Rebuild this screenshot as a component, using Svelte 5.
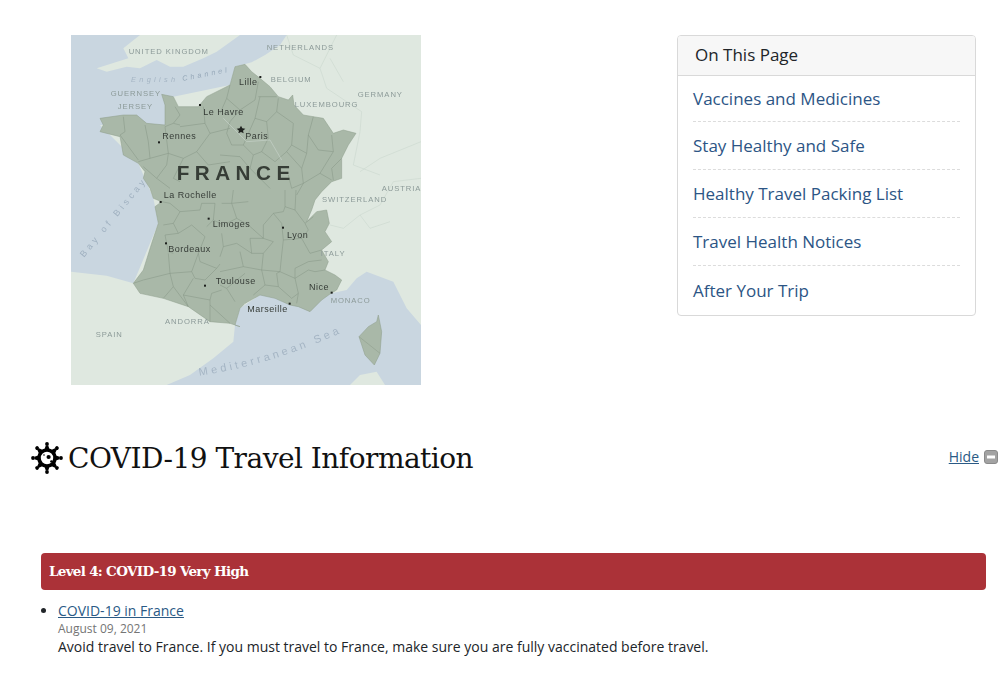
<script>
  const links = ['Vaccines and Medicines', 'Stay Healthy and Safe', 'Healthy Travel Packing List', 'Travel Health Notices', 'After Your Trip'];
  const spikes = [0, 45, 90, 135, 180, 225, 270, 315];
  const cities = [
    { x: 601, y: 156 }, { x: 420, y: 240 }, { x: 297, y: 352 }, { x: 302, y: 531 },
    { x: 446, y: 581 }, { x: 669, y: 608 }, { x: 318, y: 655 }, { x: 435, y: 782 },
    { x: 689, y: 836 }, { x: 815, y: 803 }
  ];
  const labels = [
    { t: 'Lille', x: 537, y: 180 }, { t: 'Le Havre', x: 430, y: 271 }, { t: 'Paris', x: 556, y: 343 },
    { t: 'Rennes', x: 307, y: 343 }, { t: 'La Rochelle', x: 311, y: 519 }, { t: 'Limoges', x: 458, y: 607 },
    { t: 'Lyon', x: 681, y: 639 }, { t: 'Bordeaux', x: 325, y: 680 }, { t: 'Toulouse', x: 467, y: 776 },
    { t: 'Nice', x: 747, y: 795 }, { t: 'Marseille', x: 562, y: 860 }
  ];
  const countries = [
    { t: 'UNITED KINGDOM', x: 206, y: 86 }, { t: 'NETHERLANDS', x: 620, y: 76 }, { t: 'BELGIUM', x: 632, y: 172 },
    { t: 'GERMANY', x: 893, y: 216 }, { t: 'GUERNSEY', x: 152, y: 212 }, { t: 'JERSEY', x: 173, y: 252 },
    { t: 'LUXEMBOURG', x: 704, y: 247 }, { t: 'AUSTRIA', x: 965, y: 497 }, { t: 'SWITZERLAND', x: 786, y: 531 },
    { t: 'ITALY', x: 782, y: 692 }, { t: 'MONACO', x: 812, y: 835 }, { t: 'ANDORRA', x: 315, y: 898 }, { t: 'SPAIN', x: 107, y: 937 }
  ];
  const franceOutline = 'M510 180L525 125L555 118L575 140L600 160L630 185L655 215L685 225L698 210L702 240L730 270L760 275L790 280L820 325L850 315L888 325L865 360L845 400L845 460L815 470L785 500L765 525L755 555L740 590L770 560L800 555L808 595L795 620L815 650L785 675L805 710L795 735L825 750L845 765L830 795L810 807L785 825L750 860L715 845L690 840L645 820L600 810L555 835L540 850L525 900L540 905L510 895L450 890L385 845L310 820L240 805L220 775L250 735L275 655L295 595L285 545L305 530L280 520L270 490L250 460L255 440L235 415L190 390L180 335L120 320L130 300L120 280L190 270L230 270L260 295L315 300L315 240L305 208L340 215L355 245L415 245L440 215Z';
  const deptGroups = [
    { tx: 90, ty: 90, d: 'M100 185L105 230L90 240L145 315M165 210L175 260L180 310L145 320M225 215L235 295L180 310M270 210L250 205L225 215M255 155L270 180L250 205M340 155L345 205L270 215M345 205L360 235L320 290L280 310L235 295M420 220L360 235M320 290L355 330L420 320M235 295L230 330L200 370L160 335M280 310L250 370L270 380M200 370L240 400' },
    { tx: 480, ty: 90, d: 'M30 90L20 130L60 165L105 135L115 80M115 125L170 125M120 125L105 190L140 200L170 170L175 130M170 170L220 205L215 270L260 295L265 240L280 185M20 130L0 175M60 165L30 200L20 235L35 270L70 270L105 190M140 200L145 250L125 290L165 320L200 290L215 270M125 290L100 300L70 270M265 240L295 285L340 290L335 240M260 295L245 340L200 290M245 340L250 385L300 355L340 290M300 355L335 375M250 385L230 420M365 310L335 340L340 375M100 300L90 340L150 400M0 300L60 305L90 340M205 360L215 400L250 385' },
    { tx: 210, ty: 495, d: 'M95 35L120 40L150 65L130 100L145 130L185 105L225 140L205 190L210 215L260 235L270 222M150 65L210 60L215 40L255 40L250 90L230 110M250 90L280 105M130 100L100 105M145 130L105 135L115 185L130 190M115 190L120 250L40 270L10 280M120 250L185 245L205 190M185 245L195 265L225 270L260 235M120 250L130 290L100 325M130 290L175 350M190 265L160 315L175 350M160 315L240 330L240 395M240 330L245 310L275 300M240 345L300 400' },
    { tx: 480, ty: 495, d: 'M40 0L35 40L85 35M35 40L5 40M35 40L50 85L20 100M50 85L85 105L130 145L90 145L95 190M130 145L130 105L160 70L190 65L195 50L225 60L255 100L265 120L245 145L270 190L305 180M160 70L185 100L190 150L185 195L180 245L125 240L130 190M190 150L245 145M95 190L50 160L10 170L5 130M95 190L130 190L160 155L130 145M10 170L0 200M60 185L70 230L125 240M180 245L225 265L225 235L265 215L305 210M225 265L265 240L285 245L315 240M225 265L235 310L230 340M125 240L135 285L100 315M135 285L175 290L170 250L180 245M175 290L215 325L235 310M70 230L0 245M195 50L195 0M225 60L228 0M255 100L280 80M0 285L20 295L45 335M20 295L75 250' }
  ];
</script>

<main class="page">
  <section class="top">
    <svg class="map" viewBox="33 30 1050 1050" role="img" aria-label="Map of France">
      <defs>
        <clipPath id="frame"><rect x="33" y="30" width="1050" height="1050" /></clipPath>
        <path id="medArc" d="M418 1052Q640 1020 860 915" />
      </defs>
      <g clip-path="url(#frame)">
        <rect x="33" y="30" width="1050" height="1050" fill="#dfe8e0" />
        <path fill="#c9d6e0" d="M33 30H240L190 70L205 100L110 130L140 140L200 125L240 130L290 105L330 125L370 125L430 100L470 80L540 30H680L660 60L615 90L575 112L525 125L510 180L340 215L315 300L120 300L235 415L280 520L295 595L220 775L140 752L33 740Z" />
        <path fill="#c9d6e0" d="M525 900L540 850L600 810L815 805L860 795L890 760L920 740L1000 770L1040 850L1083 900V1080H320L390 1050L460 1000L520 950Z" />
        <path fill="#dfe8e0" d="M870 1080L900 1050L950 1040L975 1080Z" />
        <g fill="none" stroke="#c9d5cc" stroke-width="1.6">
          <path d="M680 30L700 90L780 130L800 190L860 230L905 260L900 320L880 420L960 450M810 100L850 170M1083 350L960 400L900 440M1083 460L1000 470L960 540L900 570L850 610L810 600M900 570L930 610L990 590M830 30L780 130" />
        </g>
        <path fill="#a9b8a8" stroke="#8d9d8b" stroke-width="1.5" d={franceOutline} />
        <path fill="#a9b8a8" stroke="#8d9d8b" stroke-width="1.5" d="M955 870L965 920L960 985L943 1020L915 990L897 935L925 905L950 890Z" />
        <path fill="none" stroke="#889887" stroke-width="1.4" d="M897 935L960 985" />
        <g fill="none" stroke="#859584" stroke-width="1.5" stroke-linejoin="round">
          {#each deptGroups as g}<path transform="translate({g.tx} {g.ty})" d={g.d} />{/each}
        </g>
        <path fill="none" stroke="#c5d2c8" stroke-width="2" d="M490 280L560 350L630 345L665 405" />
        {#each cities as c}<rect x={c.x - 3} y={c.y - 3} width="6" height="6" fill="#1c1f1c" />{/each}
        <path fill="#1f221f" d="M543 302L547 310L556 311L549 317L551 325L543 321L535 325L537 317L530 311L539 310Z" />
        <g class="country">
          {#each countries as c}<text x={c.x} y={c.y}>{c.t}</text>{/each}
        </g>
        <g class="city">
          {#each labels as l}<text x={l.x} y={l.y}>{l.t}</text>{/each}
        </g>
        <text class="france" x="350" y="466">FRANCE</text>
        <text class="sea english" x="213" y="172">English</text>
        <text class="sea channel" x="368" y="168" transform="rotate(-11 368 168)">Channel</text>
        <text class="sea biscay" x="72" y="698" transform="rotate(-50.6 72 698)">Bay of Biscay</text>
        <text class="sea wide"><textPath href="#medArc">Mediterranean Sea</textPath></text>
      </g>
    </svg>
    <aside class="card">
      <h2>On This Page</h2>
      <ul>
        {#each links as link}<li><a href="#top">{link}</a></li>{/each}
      </ul>
    </aside>
  </section>

  <section class="covid">
    <svg class="virus" viewBox="0 0 32 32" aria-hidden="true">
      {#each spikes as a}
        <g transform="rotate({a} 16 16)">
          <path d="M13 8.5L14.8 3.5H17.2L19 8.5Z" fill="#000" />
          <circle cx="16" cy="2" r="1.9" fill="#000" />
        </g>
      {/each}
      <circle cx="16" cy="16" r="8" fill="#fff" stroke="#000" stroke-width="3.6" />
      <circle cx="17.6" cy="15" r="2.1" fill="#000" />
      <circle cx="20.4" cy="19.4" r="1.2" fill="#000" />
      <circle cx="13" cy="13" r="0.8" fill="#000" />
    </svg>
    <h1>COVID-19 Travel Information</h1>
    <a class="hide" href="#top">Hide</a>
    <svg class="minus" viewBox="0 0 14 14" aria-hidden="true">
      <rect x="0.5" y="0.5" width="13" height="13" rx="2.5" fill="#a3a3a3" stroke="#8a8a8a" />
      <rect x="3" y="5.5" width="8" height="3" fill="#fff" />
    </svg>
  </section>

  <div class="banner">Level 4: COVID-19 Very High</div>
  <ul class="notices">
    <li>
      <a href="#top">COVID-19 in France</a>
      <span class="date">August 09, 2021</span>
      <span class="desc">Avoid travel to France. If you must travel to France, make sure you are fully vaccinated before travel.</span>
    </li>
  </ul>
</main>

<style>
  :global(body) { background: #fff; }
  .page {
    width: 1001px;
    height: 679px;
    overflow: hidden;
    font-family: "Open Sans", sans-serif;
    color: #212529;
    box-sizing: border-box;
  }
  .top {
    display: flex;
    justify-content: space-between;
    align-items: flex-start;
    padding: 35px 25px 0 71px;
    height: 420px;
    box-sizing: border-box;
  }
  .map { display: block; width: 350px; height: 350px; filter: blur(0.35px); }
  .country text { font: 23px "Liberation Sans", sans-serif; letter-spacing: 2.8px; fill: #8c9a98; }
  .city text { font: 27px "Liberation Sans", sans-serif; letter-spacing: 1.5px; fill: #363c37; }
  .france { font: bold 62px "Liberation Sans", sans-serif; letter-spacing: 16.5px; fill: #363d36; }
  .sea { font: italic 22px "Liberation Sans", sans-serif; fill: #a5b5c4; }
  .english { letter-spacing: 10px; }
  .channel { letter-spacing: 9px; fill: #98aaba; }
  .biscay { font-size: 27px; font-style: normal; letter-spacing: 10.5px; fill: #a0b1c0; }
  .wide { font-size: 33px; font-style: normal; letter-spacing: 10px; fill: #a5b5c4; }
  .card {
    width: 299px;
    height: 281px;
    box-sizing: border-box;
    border: 1px solid #d9d9d9;
    border-radius: 4px;
    overflow: hidden;
  }
  .card h2 {
    margin: 0;
    height: 40px;
    box-sizing: border-box;
    padding-left: 17px;
    background: #f7f7f7;
    border-bottom: 1px solid #d9d9d9;
    font-size: 17px;
    font-weight: 400;
    line-height: 38px;
    color: #212529;
  }
  .card ul { list-style: none; margin: 0; padding: 0 15px; }
  .card li { height: 48px; box-sizing: border-box; border-bottom: 1px dashed #dcdcdc; line-height: 48px; }
  .card li:first-child { height: 46px; line-height: 46px; }
  .card li:last-child { border-bottom: 0; line-height: 50px; }
  .card a { color: #2c5585; text-decoration: none; font-size: 17px; }
  .covid {
    display: flex;
    align-items: center;
    padding: 0 3px 0 31px;
    height: 32px;
    margin-top: 22px;
  }
  .virus { width: 32px; height: 32px; flex: none; }
  .covid h1 {
    margin: 0 0 0 5px;
    flex: 1;
    font-family: "DejaVu Serif", serif;
    font-size: 28px;
    letter-spacing: -0.52px;
    font-weight: 400;
    color: #111;
    white-space: nowrap;
  }
  .hide { color: #2a5a85; font-size: 14px; margin: 0 5px 3px 0; }
  .minus { width: 14px; height: 14px; flex: none; margin-bottom: 3px; }
  .banner {
    margin: 79px 15px 0 41px;
    height: 37px;
    background: #ab3238;
    border-radius: 4px;
    color: #fff;
    padding-left: 8px;
    font: bold 13.5px/36px "DejaVu Serif", serif;
    letter-spacing: -0.7px;
  }
  .notices { margin: 12px 0 0; padding: 0 0 0 58px; font-size: 14px; }
  .notices li { line-height: 18px; }
  .notices a { color: #2a5a85; font-size: 14px; }
  .date { display: block; color: #757575; font-size: 12px; }
  .desc { display: block; color: #212529; font-size: 14px; }
</style>
